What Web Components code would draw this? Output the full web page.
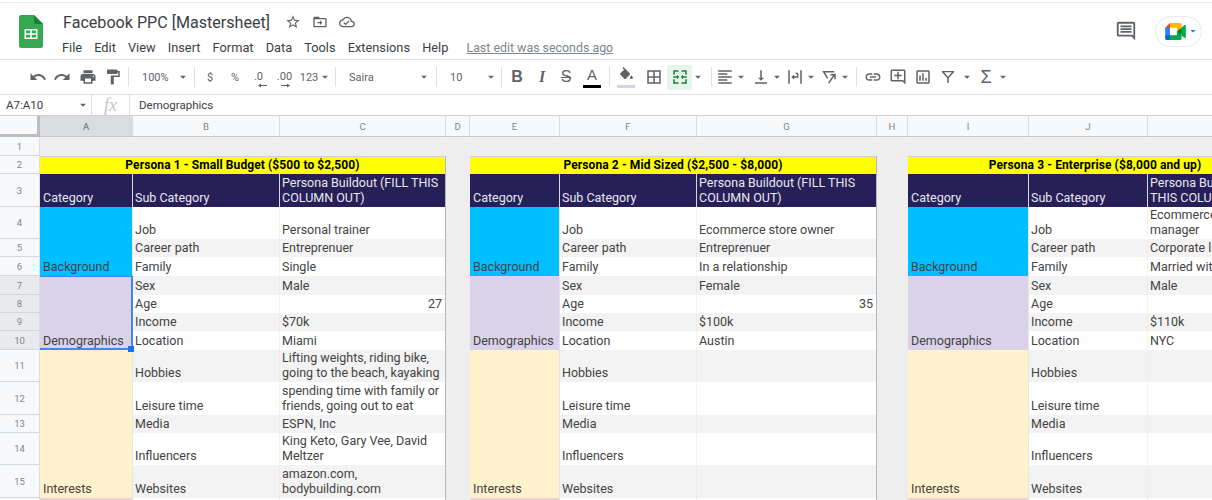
<!DOCTYPE html>
<html lang="en">
<head>
<meta charset="utf-8">
<title>Facebook PPC [Mastersheet]</title>
<style>
  html, body { margin: 0; height: 100%; overflow: hidden; background: #fff; }
  body { display: flex; flex-direction: column; font-family: Roboto, "Liberation Sans", sans-serif; }
</style>
</head>
<body>
<gs-appbar>Facebook PPC [Mastersheet]</gs-appbar>
<gs-toolbar></gs-toolbar>
<gs-formula-bar ref="A7:A10">Demographics</gs-formula-bar>
<gs-sheet></gs-sheet>

<script>
(() => {
  const icons = {
    undo: "M12.5 8c-2.65 0-5.05.99-6.9 2.6L2 7v9h9l-3.62-3.62c1.39-1.16 3.16-1.88 5.12-1.88 3.54 0 6.55 2.31 7.6 5.5l2.37-.78C21.08 11.03 17.15 8 12.5 8z",
    redo: "M18.4 10.6C16.55 8.99 14.15 8 11.5 8c-4.65 0-8.58 3.03-9.96 7.22L3.9 16c1.05-3.19 4.05-5.5 7.6-5.5 1.95 0 3.73.72 5.12 1.88L13 16h9V7l-3.6 3.6z",
    print: "M19 8H5c-1.66 0-3 1.34-3 3v6h4v4h12v-4h4v-6c0-1.66-1.34-3-3-3zm-3 11H8v-5h8v5zm3-7c-.55 0-1-.45-1-1s.45-1 1-1 1 .45 1 1-.45 1-1 1zm-1-9H6v4h12V3z",
    paint: "M18 4V3c0-.55-.45-1-1-1H5c-.55 0-1 .45-1 1v4c0 .55.45 1 1 1h12c.55 0 1-.45 1-1V6h1v4H9v11c0 .55.45 1 1 1h2c.55 0 1-.45 1-1v-9h8V4h-3z",
    fill: "M16.56 8.94L7.62 0 6.21 1.41l2.38 2.38-5.15 5.15c-.59.59-.59 1.54 0 2.12l5.5 5.5c.29.29.68.44 1.06.44s.77-.15 1.06-.44l5.5-5.5c.59-.58.59-1.53 0-2.12zM19 11.5s-2 2.17-2 3.5c0 1.1.9 2 2 2s2-.9 2-2c0-1.33-2-3.5-2-3.5z",
    borders: "M3 3v18h18V3H3zm8 16H5v-6h6v6zm0-8H5V5h6v6zm8 8h-6v-6h6v6zm0-8h-6V5h6v6z",
    merge: "M3 3h7v2H5v4H3zM14 3h7v6h-2V5h-5zM3 15h2v4h5v2H3zM19 15h2v6h-7v-2h5zM3 11h5V9l3 3-3 3v-2H3zM21 11h-5V9l-3 3 3 3v-2h5z",
    align: "M15 15H3v2h12v-2zm0-8H3v2h12V7zM3 13h18v-2H3v2zm0 8h18v-2H3v2zM3 3v2h18V3H3z",
    valign: "M16 13h-3V3h-2v10H8l4 4 4-4zM4 19v2h16v-2H4z",
    wrap: "M3 3h2v18H3zM19 3h2v18h-2zM8 11h6.5V8.500c0-.3-.2-.5-.5-.5h-1V6h1c1.400 0 2.500 1.100 2.500 2.500V13H11v2.500L7 12l4-3.500V11z",
    rotate: "M3 4h16.5l-1.4 2H6.6l4.1 6.8-1.1 1.8zM21 7.6V15h-2v-3.9l-6.6 9.5-1.7-1.1 6.6-9.6H14V8z",
    link: "M3.9 12c0-1.71 1.39-3.1 3.1-3.1h4V7H7c-2.76 0-5 2.24-5 5s2.24 5 5 5h4v-1.9H7c-1.71 0-3.1-1.39-3.1-3.1zM8 13h8v-2H8v2zm9-6h-4v1.9h4c1.71 0 3.1 1.39 3.1 3.1s-1.39 3.1-3.1 3.1h-4V17h4c2.76 0 5-2.24 5-5s-2.24-5-5-5z",
    addcomment: "M22 4c0-1.1-.9-2-2-2H4c-1.1 0-2 .9-2 2v12c0 1.1.9 2 2 2h14l4 4V4zm-2 13.17L18.83 16H4V4h16v13.17zM13 5h-2v4H7v2h4v4h2v-4h4V9h-4z",
    chart: "M19 3H5c-1.1 0-2 .9-2 2v14c0 1.1.9 2 2 2h14c1.1 0 2-.9 2-2V5c0-1.1-.9-2-2-2zm0 16H5V5h14v14zM7 10h2v7H7zm4-3h2v10h-2zm4 6h2v4h-2z",
    filter: "M4 4h16v1.600l-7 7.600V20h-2v-6.800L4 5.600zM6.800 5.800l5.200 5.700 5.200-5.700z",
    comment: "M21.99 4c0-1.1-.89-2-1.99-2H4c-1.1 0-2 .9-2 2v12c0 1.1.9 2 2 2h14l4 4-.01-18zM20 4v13.17L18.83 16H4V4h16zM6 12h12v2H6zm0-3h12v2H6zm0-3h12v2H6z",
    star: "M22 9.24l-7.19-.62L12 2 9.19 8.63 2 9.24l5.46 4.73L5.82 21 12 17.27 18.18 21l-1.63-7.03L22 9.24zM12 15.4l-3.76 2.27 1-4.28-3.32-2.88 4.38-.38L12 6.1l1.71 4.04 4.38.38-3.32 2.88 1 4.28L12 15.4z",
    move: "M20 6h-8l-2-2H4c-1.1 0-2 .9-2 2v12c0 1.1.9 2 2 2h16c1.1 0 2-.9 2-2V8c0-1.1-.9-2-2-2zm0 12H4V8h16v10zM12 9.5l3.5 3.5-3.5 3.5V14H8v-2h4z",
    cloud: "M19.35 10.04C18.67 6.59 15.64 4 12 4 9.11 4 6.6 5.64 5.35 8.04 2.34 8.36 0 10.91 0 14c0 3.31 2.69 6 6 6h13c2.76 0 5-2.24 5-5 0-2.64-2.05-4.78-4.65-4.96zM19 18H6c-2.21 0-4-1.79-4-4 0-2.05 1.53-3.76 3.56-3.97l1.07-.11.5-.95C8.08 7.14 9.94 6 12 6c2.62 0 4.88 1.86 5.39 4.43l.3 1.5 1.53.11c1.56.1 2.78 1.41 2.78 2.96 0 1.65-1.35 3-3 3zm-9-3.82l-2.09-2.09L6.5 13.5 10 17l6.01-6.01-1.41-1.41z",
    caret: "M7 10l5 5 5-5z",
  };

  class GsIcon extends HTMLElement {
    connectedCallback() {
      const size = this.getAttribute("size") || 18;
      const color = this.getAttribute("color") || "#5f6368";
      const path = icons[this.getAttribute("name")] || "";
      this.attachShadow({ mode: "open" }).innerHTML = `
        <style>:host { display: inline-flex; flex: none; } svg { display: block; }</style>
        <svg width="${size}" height="${size}" viewBox="0 0 24 24" fill="${color}"><path fill-rule="evenodd" d="${path}"/></svg>`;
    }
  }
  customElements.define("gs-icon", GsIcon);

  const menus = ["File", "Edit", "View", "Insert", "Format", "Data", "Tools", "Extensions", "Help"];

  class GsAppbar extends HTMLElement {
    connectedCallback() {
      this.attachShadow({ mode: "open" }).innerHTML = `
        <style>
          :host {
            display: flex;
            flex: none;
            height: 56px;
            margin-top: 2px;
            border-top: 1px solid #e8eaed;
            border-bottom: 1px solid #e0e0e0;
            box-sizing: content-box;
            color: #3c4043;
          }
          .logo { margin: 12px 0 0 19px; width: 24px; height: 33px; flex: none; }
          .main { margin-left: 20px; flex: 1; min-width: 0; }
          .title-row { display: flex; align-items: center; height: 22px; margin-top: 8px; }
          .title { font-size: 16.100px; width: 216.500px; white-space: nowrap; }
          .title-row gs-icon { width: 27px; justify-content: center; }
          nav { display: flex; align-items: center; height: 18px; margin-top: 5px; font-size: 12.800px; margin-left: -1px; }
          nav span { margin-right: 12.100px; }
          nav a { margin-left: 6px; font-size: 12.400px; color: #80868b; text-decoration: underline; white-space: nowrap; }
          .right { display: flex; align-items: center; padding-right: 10px; }
          .pill {
            display: flex;
            align-items: center;
            gap: 1px;
            margin: 0 0 0 18px;
            padding-left: 9px;
            width: 47px;
            height: 31px;
            box-sizing: border-box;
            border: 1px solid #e8eaed;
            border-radius: 16px;
          }
        </style>
        <svg class="logo" viewBox="0 0 24 33">
          <path fill="#34a853" d="M2.5 0H15l9 9v21.5a2.5 2.5 0 0 1-2.5 2.5h-19A2.5 2.5 0 0 1 0 30.500V2.500A2.500 2.500 0 0 1 2.500 0z"/>
          <path fill="#188038" d="M15 0l9 9h-6.500A2.500 2.500 0 0 1 15 6.500z"/>
          <path fill="#fff" fill-rule="evenodd" d="M5.500 14h13v10h-13zM7 15.500v2.700h4.200v-2.700zm5.800 0v2.700H17v-2.700zM7 19.800v2.700h4.200v-2.700zm5.800 0v2.700H17v-2.700z"/>
        </svg>
        <div class="main">
          <div class="title-row">
            <span class="title"><slot></slot></span>
            <gs-icon name="star" size="16"></gs-icon>
            <gs-icon name="move" size="16"></gs-icon>
            <gs-icon name="cloud" size="16"></gs-icon>
          </div>
          <nav>${menus.map((m) => `<span>${m}</span>`).join("")}<a>Last edit was seconds ago</a></nav>
        </div>
        <div class="right">
          <gs-icon name="comment" size="22"></gs-icon>
          <div class="pill">
            <svg width="21" height="17" viewBox="0 0 87.500 72">
              <path fill="#00832d" d="M49.500 36l8.530 9.750 11.470 7.330 2-17.020-2-16.640-11.690 6.440z"/>
              <path fill="#0066da" d="M0 51.500V66c0 3.315 2.685 6 6 6h14.500l3-10.960-3-9.540-9.950-3z"/>
              <path fill="#e94235" d="M20.500 0L0 20.500l10.550 3 9.950-3 2.950-9.410z"/>
              <path fill="#2684fc" d="M20.500 20.500H0v31h20.500z"/>
              <path fill="#00ac47" d="M82.600 8.680L69.500 19.420v33.660l13.160 10.790c1.970 1.540 4.850.135 4.850-2.370V11c0-2.535-2.945-3.925-4.910-2.320zM49.500 36v15.500h-29V72h43c3.315 0 6-2.685 6-6V53.080z"/>
              <path fill="#ffba00" d="M63.500 0h-43v20.500h29V36l20-16.570V6c0-3.315-2.685-6-6-6z"/>
            </svg>
            <gs-icon name="caret" size="12" color="#1a73e8"></gs-icon>
          </div>
        </div>`;
    }
  }
  customElements.define("gs-appbar", GsAppbar);

  // each item: [type, width, payload]
  const toolbarItems = [
    ["i", 24, "undo"], ["i", 24, "redo"], ["i", 27, "print"], ["i", 24, "paint"], ["s", 6],
    ["t", 44, "100%", "pad"], ["c", 16], ["s", 6],
    ["t", 26, "$"], ["t", 24, "%"], ["dec", 23, ".0", "M8 2.500L5 4.500l3 2V5h6V4H8z"], ["dec", 29, ".00", "M8 2.500l3 2-3 2V5H2V4h6z"],
    ["t", 20, "123"], ["c", 11], ["g", 2], ["s", 6],
    ["t", 78, "Saira", "pad"], ["c", 16], ["g", 1], ["s", 6],
    ["t", 44, "10", "pad"], ["c", 15], ["s", 6],
    ["b", 26, "B"], ["it", 24, "I"], ["st", 24, "S"], ["color", 28, "A"], ["s", 6],
    ["fill", 28], ["i", 27, "borders"], ["merge", 25], ["c", 12], ["g", 4], ["s", 6],
    ["i", 22, "align"], ["c", 10], ["g", 4], ["i", 22, "valign"], ["c", 10], ["g", 2],
    ["i", 22, "wrap"], ["c", 10], ["g", 2], ["i", 22, "rotate"], ["c", 10], ["g", 3], ["s", 6],
    ["i", 27, "link"], ["i", 24, "addcomment"], ["i", 26, "chart"], ["i", 24, "filter"], ["c", 14],
    ["sum", 24], ["c", 10],
  ];

  class GsToolbar extends HTMLElement {
    connectedCallback() {
      const html = toolbarItems.map(([type, w, a, b]) => {
        const box = (cls, inner) => `<div class="${cls}" style="width:${w}px">${inner}</div>`;
        switch (type) {
          case "i": return box("it", `<gs-icon name="${a}" size="18"></gs-icon>`);
          case "s": return box("it", `<div class="sep"></div>`);
          case "g": return box("it", "");
          case "c": return box("it", `<gs-icon name="caret" size="14"></gs-icon>`);
          case "t": return box(b ? "it txt pad" : "it txt", a);
          case "dec": return box("it txt dec", `<span>${a}</span><svg width="14" height="7" viewBox="0 0 14 7" fill="#5f6368"><path d="${b}"/></svg>`);
          case "b": return box("it fmt bold", a);
          case "it": return box("it fmt ital", a);
          case "st": return box("it fmt str", a);
          case "color": return box("it fmt col", `<span>${a}</span>`);
          case "fill": return box("it fillb", `<gs-icon name="fill" size="17"></gs-icon><i></i>`);
          case "merge": return box("it on", `<gs-icon name="merge" size="18" color="#188038"></gs-icon>`);
          case "sum": return box("it sum", "\u03a3");
          default: return "";
        }
      }).join("");
      this.attachShadow({ mode: "open" }).innerHTML = `
        <style>
          :host {
            display: flex;
            flex: none;
            align-items: center;
            height: 34px;
            padding-left: 26px;
            border-bottom: 1px solid #e0e0e0;
            color: #5f6368;
            font-size: 11px;
          }
          .it { display: flex; align-items: center; justify-content: center; flex: none; height: 25px; white-space: nowrap; position: relative; }
          .sep { width: 1px; height: 20px; background: #e0e0e0; }
          .txt { font-size: 11px; }
          .pad { justify-content: flex-start; padding-left: 11px; box-sizing: border-box; }
          .dec { flex-direction: column; line-height: 11px; padding-top: 5px; box-sizing: border-box; }
          .dec svg { display: block; margin: -1px 0 0 2px; }
          .fmt { font-family: "Liberation Sans", sans-serif; font-size: 16px; }
          .bold { font-weight: 700; }
          .ital { font-family: "Liberation Serif", serif; font-style: italic; font-weight: 700; }
          .str { text-decoration: line-through; }
          .col span { display: block; line-height: 14px; padding-bottom: 3px; border-bottom: 3px solid #000; width: 18px; text-align: center; margin-top: 2px; font-size: 15px; }
          .fillb { flex-direction: column; }
          .fillb i { display: block; width: 18px; height: 3px; background: #d9d2e9; margin-top: 1px; }
          .on { background: #e6f4ea; border-radius: 2px; }
          .sum { font-family: "Liberation Sans", sans-serif; font-size: 18px; }
        </style>${html}`;
    }
  }
  customElements.define("gs-toolbar", GsToolbar);

  class GsFormulaBar extends HTMLElement {
    connectedCallback() {
      this.attachShadow({ mode: "open" }).innerHTML = `
        <style>
          :host {
            display: flex;
            flex: none;
            align-items: center;
            height: 20px;
            border-bottom: 1px solid #d0d0d0;
            color: #3c4043;
            font-size: 11.500px;
          }
          .ref { width: 70px; padding-left: 6px; padding-bottom: 1px; }
          .sep { width: 1px; height: 20px; background: #e0e0e0; flex: none; }
          .fx { width: 37px; text-align: center; font: italic 18px "Liberation Serif", serif; color: #c4c7c5; }
          .val { padding-left: 9px; padding-bottom: 1px; }
        </style>
        <div class="ref">${this.getAttribute("ref")}</div>
        <gs-icon name="caret" size="14"></gs-icon>
        <div style="width:1px"></div>
        <div class="sep"></div>
        <div class="fx">fx</div>
        <div class="sep"></div>
        <div class="val"><slot></slot></div>`;
    }
  }
  customElements.define("gs-formula-bar", GsFormulaBar);

  const colWidths = [40, 93, 147, 166, 24, 90, 137, 180, 31, 121, 119, 135];
  const colLabels = ["", "A", "B", "C", "D", "E", "F", "G", "H", "I", "J", "K"];
  const rowHeights = [21, 19, 18, 33, 32, 18, 19, 19, 18, 18, 19, 32, 33, 18, 32, 33, 20];

  const subCats = ["Job", "Career path", "Family", "Sex", "Age", "Income", "Location", "Hobbies", "Leisure time", "Media", "Influencers", "Websites"];
  const personas = [
    {
      col: 2,
      title: "Persona 1 - Small Budget ($500 to $2,500)",
      head: "Persona Buildout (FILL THIS\nCOLUMN OUT)",
      vals: ["Personal trainer", "Entreprenuer", "Single", "Male", "27", "$70k", "Miami",
        "Lifting weights, riding bike,\ngoing to the beach, kayaking",
        "spending time with family or\nfriends, going out to eat", "ESPN, Inc",
        "King Keto, Gary Vee, David\nMeltzer", "amazon.com,\nbodybuilding.com"],
    },
    {
      col: 6,
      title: "Persona 2 - Mid Sized ($2,500 - $8,000)",
      head: "Persona Buildout (FILL THIS\nCOLUMN OUT)",
      vals: ["Ecommerce store owner", "Entreprenuer", "In a relationship", "Female", "35", "$100k", "Austin", "", "", "", "", ""],
    },
    {
      col: 10,
      title: "Persona 3 - Enterprise ($8,000 and up)",
      head: "Persona Buildout (FILL\nTHIS COLUMN OUT)",
      vals: ["Ecommerce\nmanager", "Corporate ladder", "Married with kids", "Male", "", "$110k", "NYC", "", "", "", "", ""],
    },
  ];
  const groups = [
    ["Background", 5, 3, "#00bfff"],
    ["Demographics", 8, 4, "#d9d2e9"],
    ["Interests", 12, 5, "#fff2cc"],
    ["", 17, 1, "#ead1dc"],
  ];

  class GsSheet extends HTMLElement {
    connectedCallback() {
      const cell = (c, r, cls, text, span = "") =>
        `<div class="${cls}" style="grid-column:${c}${span ? " / span " + span.c : ""};grid-row:${r}">${text}</div>`;
      let html = cell(1, 1, "corner", "");
      colLabels.slice(1).forEach((label, i) => {
        html += cell(i + 2, 1, i === 0 ? "ch sel" : "ch", label);
      });
      rowHeights.slice(1).forEach((_, i) => {
        const n = i + 1;
        html += cell(1, n + 1, n >= 7 && n <= 10 ? "rh sel" : "rh", n === 16 ? "" : n);
      });
      personas.forEach((p) => {
        const c = p.col;
        html += cell(c, 3, "title", p.title, { c: 3 });
        html += cell(c, 4, "c head first", "Category");
        html += cell(c + 1, 4, "c head", "Sub Category");
        html += cell(c + 2, 4, "c head edge", p.head);
        groups.forEach(([name, r, span, bg]) => {
          html += `<div class="c first" style="grid-column:${c};grid-row:${r} / span ${span};background:${bg}">${name}</div>`;
        });
        subCats.forEach((sub, i) => {
          const zebra = i % 2 === 0 ? "w" : "g";
          html += cell(c + 1, i + 5, `c ${zebra}`, sub);
          const num = /^\d+$/.test(p.vals[i]) ? " num" : "";
          html += cell(c + 2, i + 5, `c ${zebra} edge${num}`, p.vals[i]);
        });
        html += cell(c + 1, 17, "c w", "");
        html += cell(c + 2, 17, "c w edge", "");
      });
      html += `<div class="range"><i></i></div>`;
      this.attachShadow({ mode: "open" }).innerHTML = `
        <style>
          :host {
            display: block;
            flex: 1;
            min-height: 0;
            overflow: hidden;
            background: #eeeeee;
          }
          .grid {
            display: grid;
            grid-template-columns: ${colWidths.map((w) => w + "px").join(" ")};
            grid-template-rows: ${rowHeights.map((h) => h + "px").join(" ")};
            width: max-content;
            font: 12.500px/14.500px Roboto, "Noto Sans", sans-serif;
            color: #434343;
          }
          .corner { grid-area: 1 / 1; background: #f8f9fa; border-right: 3px solid #bdbdbd; border-bottom: 3px solid #bdbdbd; box-sizing: border-box; }
          .ch, .rh {
            display: flex;
            align-items: center;
            justify-content: center;
            box-sizing: border-box;
            background: #f8f9fa;
            color: #80868b;
            font: 9.500px Roboto, sans-serif;
          }
          .ch { border-right: 1px solid #dadce0; border-bottom: 1px solid #c4c7c5; }
          .rh { border-bottom: 1px solid #d3d5d8; border-right: 1px solid #dadce0; }
          .sel { background: #e8eaed; }
          .ch.sel { background: #dadce0; color: #5f6368; }
          .c {
            display: flex;
            align-items: flex-end;
            box-sizing: border-box;
            padding: 0 3px 2px 2px;
            white-space: pre;
            overflow: hidden;
          }
          .first { padding-left: 3px; border-right: 1px solid #e6e6e6; }
          .title {
            display: flex;
            align-items: center;
            justify-content: center;
            background: #ffff00;
            color: #000;
            font-weight: 700;
            font-size: 12px;
            letter-spacing: .1px;
            border-top: 1px solid #d0d0d0;
            border-right: 1px solid #b7b7b7;
            white-space: nowrap;
            box-sizing: border-box;
          }
          .head { background: #271f57; color: #e8e8ee; border-right: 1px solid #d9d9d9; }
          .w { background: #fff; border-right: 1px solid #f3f3f3; }
          .g { background: #f3f3f3; border-right: 1px solid #ededed; }
          .c.edge { border-right: 1px solid #b7b7b7; }
          .num { justify-content: flex-end; }
          .range {
            grid-column: 2;
            grid-row: 8 / span 4;
            position: relative;
            border: solid #4285f4;
            border-width: 1px 2px 2px 0;
            pointer-events: none;
          }
          .range i {
            position: absolute;
            right: -3px;
            bottom: -4px;
            width: 6px;
            height: 6px;
            background: #1a73e8;
          }
        </style>
        <div class="grid">${html}</div>`;
    }
  }
  customElements.define("gs-sheet", GsSheet);
})();
</script>
</body>
</html>
